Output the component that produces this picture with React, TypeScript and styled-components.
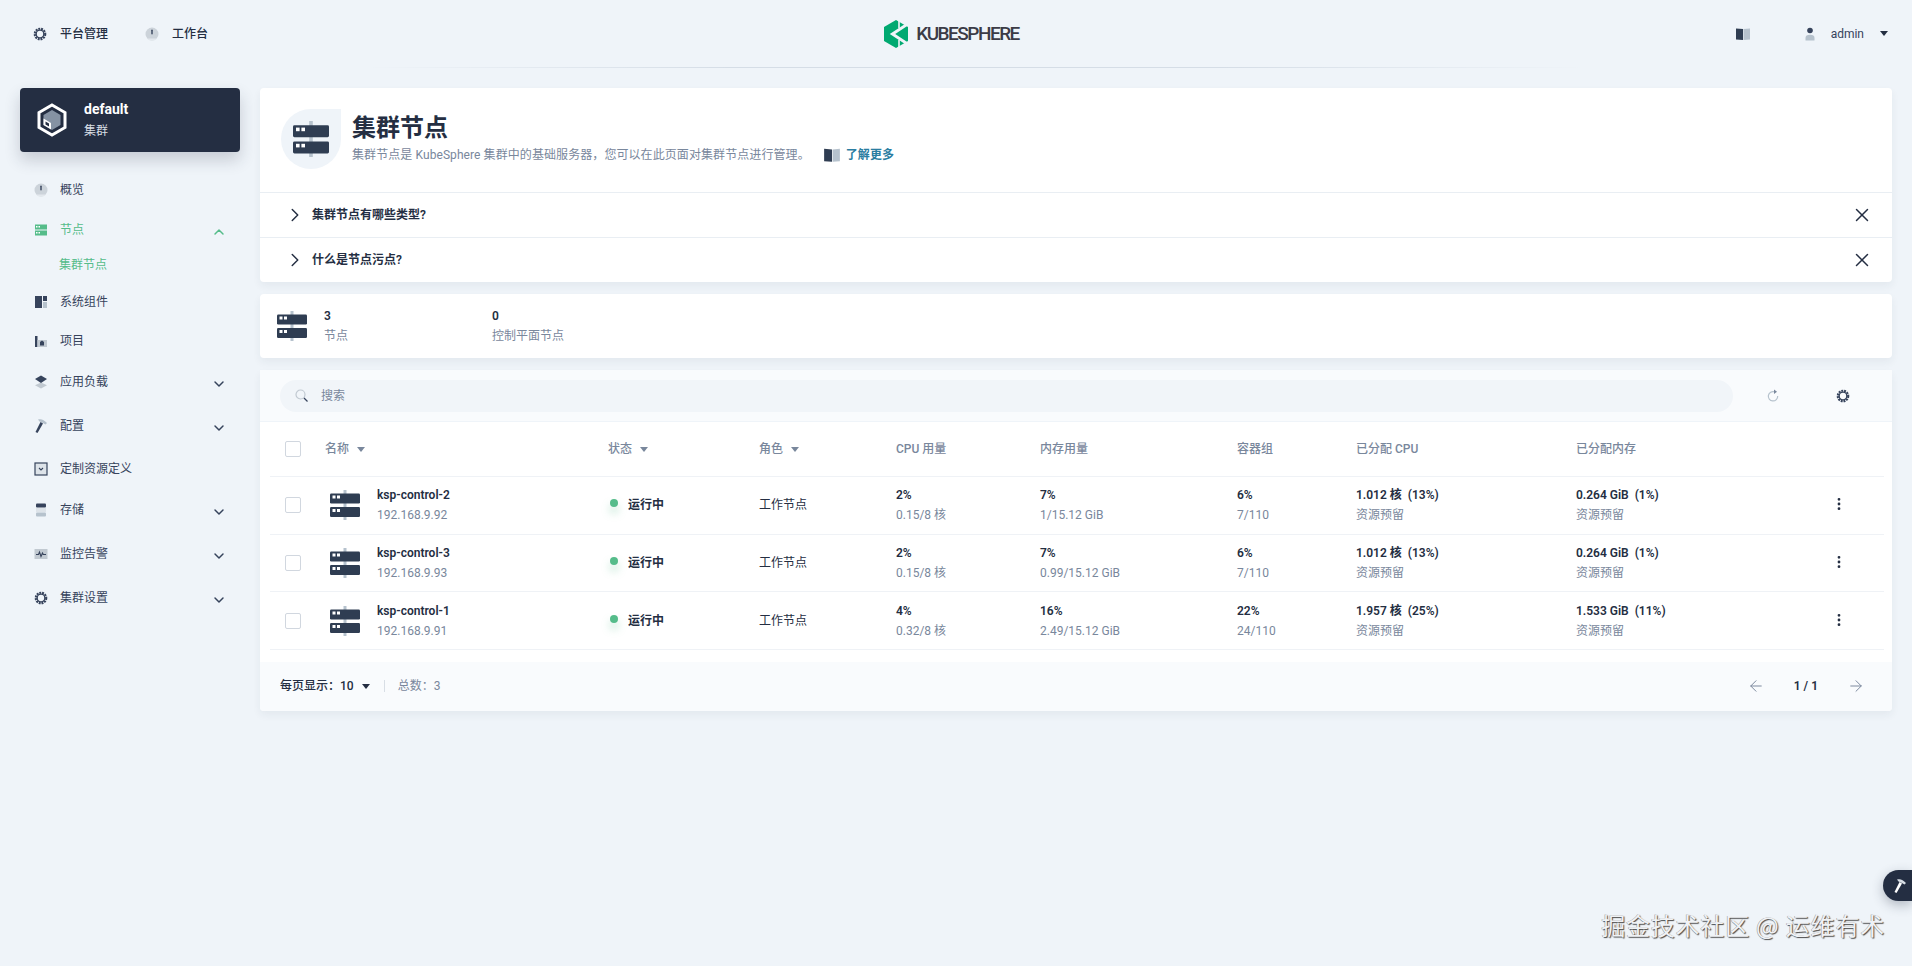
import React from 'react';
import styled, { createGlobalStyle } from 'styled-components';
import { ArrowLeft, ArrowRight, ChevronDown, ChevronRight, ChevronUp, EllipsisVertical, X } from 'lucide-react';

const dark = '#242e42';
const grey = '#79879c';
const green = '#55bc8a';

const GlobalStyle = createGlobalStyle`
  html, body {
    margin: 0;
    padding: 0;
    background: #eff4f9;
  }
  body {
    font-family: Roboto, "Noto Sans CJK SC", sans-serif;
    font-size: 12px;
    line-height: 20px;
    color: ${dark};
  }
`;

const Page = styled.div`
  position: relative;
  width: 1912px;
  height: 966px;
  overflow: hidden;
  background: #eff4f9;
`;

const Header = styled.header`
  display: grid;
  grid-template-columns: 1fr auto 1fr;
  align-items: center;
  height: 67px;
  padding: 0 24px 0 32px;
`;

const HeaderLine = styled.div`
  height: 1px;
  margin: 0 327px 0 365px;
  background: linear-gradient(90deg, rgba(200, 209, 220, 0), #d5dde6 30%, #d5dde6 70%, rgba(200, 209, 220, 0));
`;

const HeaderLeft = styled.div`
  display: flex;
  align-items: center;
  gap: 36px;
`;

const HeaderLink = styled.a`
  display: flex;
  align-items: center;
  gap: 12px;
  font-weight: 500;
  color: ${dark};
`;

const GearSlot = styled.span`
  display: flex;
  width: 16px;
  justify-content: center;
`;

const Logo = styled.div`
  display: flex;
  align-items: center;
  gap: 8px;
  margin-right: 17px;
`;

const LogoText = styled.span`
  font-size: 19px;
  font-weight: 500;
  letter-spacing: -1.5px;
  color: #3b3b46;
`;

const HeaderRight = styled.div`
  display: flex;
  align-items: center;
  justify-content: flex-end;
`;

const BookSlot = styled.span`
  display: flex;
  margin-right: 51px;
`;

const UserName = styled.span`
  margin: 0 16px 0 13px;
  color: #36435c;
`;

const Caret = styled.span<{ $color?: string }>`
  display: inline-block;
  width: 0;
  height: 0;
  border-left: 4px solid transparent;
  border-right: 4px solid transparent;
  border-top: 5px solid ${(p) => p.$color || dark};
`;

const Layout = styled.div`
  display: flex;
`;

const Sidebar = styled.aside`
  width: 220px;
  padding: 20px 20px 0;
  flex-shrink: 0;
`;

const ClusterCard = styled.div`
  display: flex;
  align-items: center;
  gap: 17px;
  height: 64px;
  padding-left: 17px;
  box-sizing: border-box;
  background: ${dark};
  border-radius: 4px;
  box-shadow: 0 8px 16px rgba(36, 46, 66, 0.2);
  color: #fff;
`;

const ClusterName = styled.div`
  margin-bottom: 2px;
  font-size: 14px;
  font-weight: 700;
`;

const ClusterType = styled.div`
  color: #d8dee5;
`;

const Nav = styled.nav`
  margin-top: 22px;
`;

const NavRow = styled.div<{ $mt?: number; $active?: boolean }>`
  display: flex;
  align-items: center;
  gap: 11px;
  height: 32px;
  margin-top: ${(p) => p.$mt || 0}px;
  padding: 0 3px 0 13px;
  color: ${(p) => (p.$active ? green : '#36435c')};
`;

const NavArrow = styled.span`
  display: flex;
  margin-left: auto;
  margin-right: 10px;
  padding-top: 3px;
`;

const SubRow = styled.div<{ $mt?: number }>`
  height: 24px;
  line-height: 24px;
  margin-top: ${(p) => p.$mt || 0}px;
  padding-left: 39px;
  color: ${green};
`;

const Main = styled.main`
  width: 1632px;
  padding-top: 20px;
`;

const Card = styled.section`
  background: #fff;
  border-radius: 4px;
  box-shadow: 0 4px 8px rgba(36, 46, 66, 0.06);
  margin-bottom: 12px;
`;

const Banner = styled.div`
  display: flex;
  gap: 11px;
  height: 104px;
  padding: 21px 0 0 21px;
  box-sizing: border-box;
`;

const BannerIcon = styled.div`
  display: flex;
  align-items: center;
  justify-content: center;
  width: 60px;
  height: 60px;
  border-radius: 50% 0 50% 50%;
  background: #eff4f9;
`;

const Title = styled.h1`
  margin: 3px 0 1px;
  font-size: 24px;
  line-height: 32px;
  font-weight: 700;
  color: ${dark};
`;

const Description = styled.div`
  display: flex;
  align-items: center;
  letter-spacing: 0.08px;
  color: ${grey};
`;

const LearnMore = styled.a`
  display: flex;
  align-items: center;
  gap: 5px;
  margin-left: 13px;
  font-weight: 600;
  color: #2a7da1;
`;

const TipRow = styled.div`
  display: flex;
  align-items: center;
  height: 45px;
  padding: 0 19px 0 24px;
  box-sizing: border-box;
  border-top: 1px solid #e9eef3;
  font-weight: 600;
  color: ${dark};
`;

const TipText = styled.span`
  margin-left: 6px;
  flex: 1;
`;

const Stats = styled(Card)`
  display: flex;
  align-items: center;
  height: 64px;
  padding-left: 17px;
`;

const StatIcon = styled.div`
  display: flex;
  margin-right: 17px;
`;

const Stat = styled.div`
  width: 168px;
`;

const StatValue = styled.div`
  font-weight: 600;
`;

const StatLabel = styled.div`
  color: ${grey};
`;

const Toolbar = styled.div`
  display: flex;
  align-items: center;
  height: 52px;
  padding: 0 33px 0 20px;
  box-sizing: border-box;
  background: #f9fbfd;
  border-bottom: 1px solid #eff4f9;
`;

const SearchBox = styled.div`
  flex: 1;
  display: flex;
  align-items: center;
  gap: 12px;
  height: 32px;
  padding-left: 15px;
  border-radius: 16px;
  background: #f1f5f9;
  color: ${grey};
`;

const ToolButton = styled.button<{ $ml: number }>`
  display: flex;
  align-items: center;
  justify-content: center;
  width: 32px;
  height: 32px;
  margin-left: ${(p) => p.$ml}px;
  padding: 0;
  border: 0;
  background: transparent;
`;

const columns = '55px 283px 151px 137px 144px 197px 119px 220px 244px 60px';

const HeadRow = styled.div`
  display: grid;
  grid-template-columns: ${columns};
  align-items: center;
  height: 54px;
  margin: 0 8px 0 10px;
  border-bottom: 1px solid #eff2f6;
  color: ${grey};
  font-weight: 500;
`;

const BodyRow = styled(HeadRow)`
  height: 57.67px;
  box-sizing: border-box;
  font-weight: 400;
  color: ${dark};
`;

const Check = styled.span`
  display: block;
  width: 14px;
  height: 14px;
  margin-left: 15px;
  border: 1px solid #d1d7df;
  border-radius: 2px;
  background: #fff;
`;

const Sortable = styled.span`
  display: flex;
  align-items: center;
  gap: 8px;
`;

const NameCell = styled.div`
  display: flex;
  align-items: center;
  gap: 17px;
  padding-left: 5px;
`;

const Strong = styled.div`
  font-weight: 600;
  color: ${dark};
`;

const Sub = styled.div`
  color: ${grey};
`;

const Status = styled.div`
  display: flex;
  align-items: center;
  gap: 10px;
  padding-left: 2px;
  font-weight: 600;
`;

const Dot = styled.span`
  width: 8px;
  height: 8px;
  margin-top: -4px;
  border-radius: 50%;
  background: ${green};
  box-shadow: 0 6px 8px rgba(85, 188, 138, 0.36);
`;

const Menu = styled.div`
  display: flex;
  padding: 0 0 2px 11px;
  color: ${dark};
`;

const Footer = styled.div`
  display: flex;
  align-items: center;
  height: 49px;
  margin-top: 12px;
  padding: 0 27px 0 20px;
  background: #f9fbfd;
  border-radius: 0 0 4px 4px;
`;

const PageSize = styled.div`
  display: flex;
  align-items: center;
  gap: 8px;
  font-weight: 500;
`;

const Divider = styled.span`
  width: 1px;
  height: 12px;
  margin: 0 13px 0 14px;
  background: #d8dee5;
`;

const Total = styled.span`
  color: ${grey};
`;

const Pager = styled.div`
  display: flex;
  align-items: center;
  gap: 29px;
  margin-left: auto;
  font-weight: 600;
  color: ${grey};
`;

const PagerText = styled.span`
  color: ${dark};
`;

const FloatButton = styled.div`
  position: absolute;
  right: 0;
  top: 870px;
  display: flex;
  align-items: center;
  width: 29px;
  height: 31px;
  padding-left: 9px;
  box-sizing: border-box;
  border-radius: 16px 0 0 16px;
  background: ${dark};
  box-shadow: 0 4px 12px rgba(36, 46, 66, 0.3);
`;

const Watermark = styled.div`
  position: absolute;
  right: 27px;
  top: 909px;
  font-family: "Noto Sans CJK SC", sans-serif;
  font-size: 24px;
  line-height: 32px;
  letter-spacing: 0.8px;
  color: #f0f2f5;
  text-shadow: 1px 1px 1px #4a4a4a, -0.5px -0.5px 0 #9a9a9a;
  white-space: nowrap;
`;

const Server = ({ size = 30 }: { size?: number }) => (
  <svg width={size} height={size} viewBox="0 0 30 30">
    <rect x="13.5" y="0" width="3" height="30" fill="#b6c2cd" />
    <rect x="0" y="3.5" width="30" height="10" rx="1.2" fill="#2f3d52" />
    <rect x="0" y="17" width="30" height="10" rx="1.2" fill="#2f3d52" />
    <rect x="2.5" y="5.5" width="3" height="3" fill="#fff" />
    <rect x="7" y="5.5" width="3" height="3" fill="#fff" />
    <rect x="2.5" y="19" width="3" height="3" fill="#fff" />
    <rect x="7" y="19" width="3" height="3" fill="#fff" />
  </svg>
);

const Gear = () => (
  <svg width="14" height="14" viewBox="0 0 16 16" fill="none">
    <circle cx="8" cy="8" r="6" stroke="#36435c" strokeWidth="2.4" strokeDasharray="2.2 1" />
    <circle cx="8" cy="8" r="4.4" stroke="#36435c" strokeWidth="1.6" />
  </svg>
);

const Dial = () => (
  <svg width="16" height="16" viewBox="0 0 16 16">
    <circle cx="8" cy="8" r="6.5" fill="#ccd3da" />
    <path d="M3 12.5a6.5 6.5 0 0 0 10 0z" fill="#e3e8ed" />
    <rect x="7.3" y="3.5" width="1.4" height="5" rx="0.7" fill="#36435c" />
  </svg>
);

const NodesIcon = () => (
  <svg width="16" height="16" viewBox="0 0 16 16">
    <rect x="2" y="2.5" width="12" height="5" fill={green} />
    <rect x="2" y="8.5" width="12" height="5" fill={green} />
    <rect x="3" y="4" width="1.5" height="1.5" fill="#fff" />
    <rect x="5.5" y="4" width="1.5" height="1.5" fill="#fff" />
    <rect x="3" y="10" width="1.5" height="1.5" fill="#fff" />
    <rect x="5.5" y="10" width="1.5" height="1.5" fill="#fff" />
  </svg>
);

const ComponentsIcon = () => (
  <svg width="16" height="16" viewBox="0 0 16 16">
    <rect x="2" y="2" width="7" height="12" fill="#36435c" />
    <rect x="10" y="2" width="4" height="5" fill="#36435c" />
    <rect x="10" y="8" width="4" height="6" fill="#b6c2cd" />
  </svg>
);

const ProjectIcon = () => (
  <svg width="16" height="16" viewBox="0 0 16 16">
    <rect x="2" y="3" width="2.5" height="11" fill="#36435c" />
    <rect x="4.5" y="7" width="9.5" height="7" fill="#c1c9d1" />
    <path d="M7 12.5V9l2-1.5 2 1.5v3.5z" fill="#36435c" />
  </svg>
);

const StackIcon = () => (
  <svg width="16" height="16" viewBox="0 0 16 16">
    <path d="M8 8.5l6 2.8L8 14.5l-6-3.2z" fill="#c1c9d1" />
    <path d="M8 1.5l6 3.5-6 4-6-4z" fill="#36435c" />
  </svg>
);

const Hammer = ({ color = '#36435c', head = '#b6c2cd' }: { color?: string; head?: string }) => (
  <svg width="16" height="16" viewBox="0 0 16 16">
    <path d="M5 1.5c3-1 6 0 9 3.5l-1.5 1.5L9 4.5 6.5 3.5z" fill={head} />
    <path d="M7.5 4l2.5 1.5L4.5 15 2.5 14z" fill={color} />
  </svg>
);

const CrdIcon = () => (
  <svg width="16" height="16" viewBox="0 0 16 16" fill="none">
    <rect x="2" y="2" width="12" height="12" fill="#dde3e9" stroke="#36435c" strokeWidth="1.2" />
    <path d="M6 7l2 2 2-2" stroke="#36435c" strokeWidth="1.1" />
  </svg>
);

const StorageIcon = () => (
  <svg width="16" height="16" viewBox="0 0 16 16">
    <rect x="3" y="1.5" width="10" height="4" rx="1" fill="#36435c" />
    <rect x="3" y="6" width="10" height="4" fill="#dde3e9" />
    <rect x="3" y="10.5" width="10" height="4" rx="1" fill="#b6c2cd" />
  </svg>
);

const MonitorIcon = () => (
  <svg width="16" height="16" viewBox="0 0 16 16" fill="none">
    <rect x="1.5" y="3" width="13" height="10" fill="#c1c9d1" />
    <path d="M3 8.5h2.5l1-2.5 1.5 4.5 1.5-3.5.8 1.5H13" stroke="#36435c" strokeWidth="1.1" />
  </svg>
);

const Book = ({ size = 16 }: { size?: number }) => (
  <svg width={size} height={size} viewBox="0 0 16 16">
    <path d="M1 2.5l7 .5v11l-7-.5z" fill="#2f3d52" />
    <path d="M8.5 3L15 2.5v11l-6.5.5z" fill="#b6c2cd" />
  </svg>
);

const UserIcon = () => (
  <svg width="16" height="16" viewBox="0 0 16 16">
    <path d="M3.5 14.5v-2.5c0-2 1.5-3.2 4.5-3.2s4.5 1.2 4.5 3.2v2.5z" fill="#b6c2cd" />
    <circle cx="8" cy="4.5" r="2.8" fill="#36435c" />
  </svg>
);

const KsLogo = () => (
  <svg width="24" height="28" viewBox="0 0 24 28">
    <path d="M12 0l12 7v14l-12 7-12-7V7z" fill="#00a971" />
    <path d="M24.5 3.5L8.5 14l16 10.5" fill="none" stroke="#eff4f9" strokeWidth="3" />
    <path d="M15 0v8M15 20v8" stroke="#eff4f9" strokeWidth="1.6" />
  </svg>
);

const ClusterIcon = () => (
  <svg width="30" height="34" viewBox="0 0 30 34">
    <path d="M15 2l13 7.5v15L15 32 2 24.5V9.500z" fill="none" stroke="#fff" strokeWidth="3" />
    <path d="M15 7l8.5 5v10L15 27l-8.5-5V12z" fill="#8592a3" />
    <path d="M6.5 15.5l7.500 4.500v6.500L6.500 22z" fill="#fff" />
    <path d="M8.5 18.500l3.500 2v3l-3.500-2z" fill="#242e42" />
  </svg>
);

const SearchIcon = () => (
  <svg width="14" height="14" viewBox="0 0 14 14" fill="none">
    <circle cx="5.5" cy="5.5" r="4.5" stroke="#c1c9d1" strokeWidth="1.2" />
    <path d="M9 9l3.5 3.5" stroke="#36435c" strokeWidth="1.3" />
  </svg>
);

const RefreshIcon = () => (
  <svg width="14" height="14" viewBox="0 0 14 14" fill="none">
    <path d="M8.5 2.8A4.7 4.7 0 1 0 11.7 7" stroke="#b6c2cd" strokeWidth="1.2" />
    <path d="M8 0.5v4.5l3-2.3z" fill="#79879c" />
  </svg>
);

const gap = '\u00a0\u00a0';

const nodes = [
  { name: 'ksp-control-2', ip: '192.168.9.92', cpu: '2%', cpuUse: '0.15/8 核', mem: '7%', memUse: '1/15.12 GiB', pods: '6%', podUse: '7/110', allocCpu: `1.012 核${gap}(13%)`, allocMem: `0.264 GiB${gap}(1%)` },
  { name: 'ksp-control-3', ip: '192.168.9.93', cpu: '2%', cpuUse: '0.15/8 核', mem: '7%', memUse: '0.99/15.12 GiB', pods: '6%', podUse: '7/110', allocCpu: `1.012 核${gap}(13%)`, allocMem: `0.264 GiB${gap}(1%)` },
  { name: 'ksp-control-1', ip: '192.168.9.91', cpu: '4%', cpuUse: '0.32/8 核', mem: '16%', memUse: '2.49/15.12 GiB', pods: '22%', podUse: '24/110', allocCpu: `1.957 核${gap}(25%)`, allocMem: `1.533 GiB${gap}(11%)` },
];

const App: React.FC = () => {
  const down = <ChevronDown size={16} strokeWidth={2.2} color="#36435c" />;

  return (
    <Page>
      <GlobalStyle />
      <Header>
        <HeaderLeft>
          <HeaderLink><GearSlot><Gear /></GearSlot>平台管理</HeaderLink>
          <HeaderLink><Dial />工作台</HeaderLink>
        </HeaderLeft>
        <Logo>
          <KsLogo />
          <LogoText>KUBESPHERE</LogoText>
        </Logo>
        <HeaderRight>
          <BookSlot><Book /></BookSlot>
          <UserIcon />
          <UserName>admin</UserName>
          <Caret />
        </HeaderRight>
      </Header>
      <HeaderLine />

      <Layout>
        <Sidebar>
          <ClusterCard>
            <ClusterIcon />
            <div>
              <ClusterName>default</ClusterName>
              <ClusterType>集群</ClusterType>
            </div>
          </ClusterCard>
          <Nav>
            <NavRow><Dial />概览</NavRow>
            <NavRow $mt={8} $active>
              <NodesIcon />节点
              <NavArrow><ChevronUp size={16} strokeWidth={2.2} color={green} /></NavArrow>
            </NavRow>
            <SubRow $mt={7}>集群节点</SubRow>
            <NavRow $mt={9}><ComponentsIcon />系统组件</NavRow>
            <NavRow $mt={7}><ProjectIcon />项目</NavRow>
            <NavRow $mt={9}><StackIcon />应用负载<NavArrow>{down}</NavArrow></NavRow>
            <NavRow $mt={12}><Hammer />配置<NavArrow>{down}</NavArrow></NavRow>
            <NavRow $mt={11}><CrdIcon />定制资源定义</NavRow>
            <NavRow $mt={9}><StorageIcon />存储<NavArrow>{down}</NavArrow></NavRow>
            <NavRow $mt={12}><MonitorIcon />监控告警<NavArrow>{down}</NavArrow></NavRow>
            <NavRow $mt={12}><GearSlot><Gear /></GearSlot>集群设置<NavArrow>{down}</NavArrow></NavRow>
          </Nav>
        </Sidebar>

        <Main>
          <Card>
            <Banner>
              <BannerIcon><Server size={36} /></BannerIcon>
              <div>
                <Title>集群节点</Title>
                <Description>
                  集群节点是 KubeSphere 集群中的基础服务器，您可以在此页面对集群节点进行管理。
                  <LearnMore><Book size={18} />了解更多</LearnMore>
                </Description>
              </div>
            </Banner>
            <TipRow>
              <ChevronRight size={22} strokeWidth={1.6} color={dark} />
              <TipText>集群节点有哪些类型?</TipText>
              <X size={22} strokeWidth={1.6} color={dark} />
            </TipRow>
            <TipRow>
              <ChevronRight size={22} strokeWidth={1.6} color={dark} />
              <TipText>什么是节点污点?</TipText>
              <X size={22} strokeWidth={1.6} color={dark} />
            </TipRow>
          </Card>

          <Stats>
            <StatIcon><Server /></StatIcon>
            <Stat>
              <StatValue>3</StatValue>
              <StatLabel>节点</StatLabel>
            </Stat>
            <Stat>
              <StatValue>0</StatValue>
              <StatLabel>控制平面节点</StatLabel>
            </Stat>
          </Stats>

          <Card>
            <Toolbar>
              <SearchBox><SearchIcon />搜索</SearchBox>
              <ToolButton $ml={24}><RefreshIcon /></ToolButton>
              <ToolButton $ml={38}><Gear /></ToolButton>
            </Toolbar>
            <HeadRow>
              <Check />
              <Sortable>名称<Caret $color={grey} /></Sortable>
              <Sortable>状态<Caret $color={grey} /></Sortable>
              <Sortable>角色<Caret $color={grey} /></Sortable>
              <span>CPU 用量</span>
              <span>内存用量</span>
              <span>容器组</span>
              <span>已分配 CPU</span>
              <span>已分配内存</span>
              <span />
            </HeadRow>
            {nodes.map((node) => (
              <BodyRow key={node.name}>
                <Check />
                <NameCell>
                  <Server />
                  <div>
                    <Strong>{node.name}</Strong>
                    <Sub>{node.ip}</Sub>
                  </div>
                </NameCell>
                <Status><Dot />运行中</Status>
                <span>工作节点</span>
                <div><Strong>{node.cpu}</Strong><Sub>{node.cpuUse}</Sub></div>
                <div><Strong>{node.mem}</Strong><Sub>{node.memUse}</Sub></div>
                <div><Strong>{node.pods}</Strong><Sub>{node.podUse}</Sub></div>
                <div><Strong>{node.allocCpu}</Strong><Sub>资源预留</Sub></div>
                <div><Strong>{node.allocMem}</Strong><Sub>资源预留</Sub></div>
                <Menu><EllipsisVertical size={16} strokeWidth={2.2} /></Menu>
              </BodyRow>
            ))}
            <Footer>
              <PageSize>每页显示：10 <Caret /></PageSize>
              <Divider />
              <Total>总数：3</Total>
              <Pager>
                <ArrowLeft size={18} strokeWidth={1.3} />
                <PagerText>1 / 1</PagerText>
                <ArrowRight size={18} strokeWidth={1.3} />
              </Pager>
            </Footer>
          </Card>
        </Main>
      </Layout>

      <FloatButton><Hammer color="#fff" head="#d8dee5" /></FloatButton>
      <Watermark>掘金技术社区 @ 运维有术</Watermark>
    </Page>
  );
};

export default App;
